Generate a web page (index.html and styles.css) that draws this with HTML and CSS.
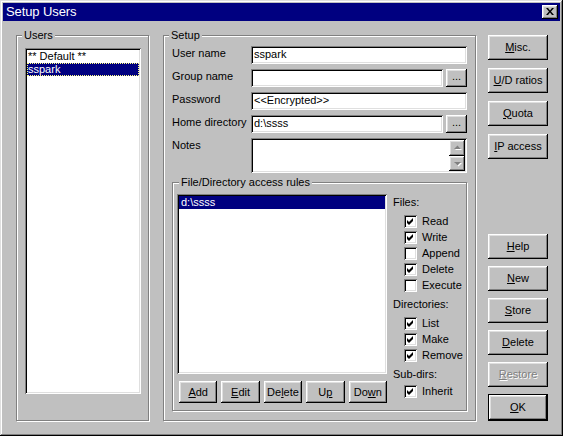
FILE: index.html
```html
<!DOCTYPE html>
<html>
<head>
<meta charset="utf-8">
<link rel="stylesheet" href="styles.css">
</head>
<body>
<div class="dialog">
  <div class="titlebar">
    <span class="title">Setup Users</span>
    <span class="close"><svg width="8" height="7" viewBox="0 0 8 7"><path d="M0 0h2l2 2.4 2-2.4h2l-3 3.5 3 3.5h-2l-2-2.4-2 2.4h-2l3-3.5z" fill="#000"/></svg></span>
  </div>
  <div class="content">
    <div class="group users">
      <span class="glabel">Users</span>
      <div class="listbox userlist">
        <div class="item">** Default **</div>
        <div class="item sel focus">sspark</div>
      </div>
    </div>

    <div class="group setup">
      <span class="glabel">Setup</span>
      <div class="form">
        <div class="lbl">User name</div>
        <div class="field">sspark</div>
        <div class="lbl">Group name</div>
        <div class="fieldrow"><div class="field grow"></div><div class="btn small">...</div></div>
        <div class="lbl">Password</div>
        <div class="field">&lt;&lt;Encrypted&gt;&gt;</div>
        <div class="lbl">Home directory</div>
        <div class="fieldrow"><div class="field grow">d:\ssss</div><div class="btn small">...</div></div>
        <div class="lbl">Notes</div>
        <div class="field notes">
          <div class="notetext"></div>
          <div class="vscroll">
            <div class="btn sbtn up"><svg width="9" height="6" viewBox="0 0 9 6"><path d="M2 5h7L5.5 1.5z" fill="#fff"/><path d="M1 4h7L4.5 0.5z" fill="#808080"/></svg></div>
            <div class="btn sbtn down"><svg width="9" height="6" viewBox="0 0 9 6"><path d="M2 2h7L5.5 5.5z" fill="#fff"/><path d="M1 1h7L4.5 4.5z" fill="#808080"/></svg></div>
          </div>
        </div>
      </div>

      <div class="group rules">
        <span class="glabel">File/Directory access rules</span>
        <div class="rules-left">
          <div class="listbox filelist">
            <div class="item sel">d:\ssss</div>
          </div>
          <div class="rulebtns">
            <div class="btn rb"><u>A</u>dd</div>
            <div class="btn rb"><u>E</u>dit</div>
            <div class="btn rb">De<u>l</u>ete</div>
            <div class="btn rb">U<u>p</u></div>
            <div class="btn rb">Do<u>w</u>n</div>
          </div>
        </div>
        <div class="rules-right">
          <div class="head">Files:</div>
          <div class="chk"><span class="box on"></span>Read</div>
          <div class="chk"><span class="box on"></span>Write</div>
          <div class="chk"><span class="box"></span>Append</div>
          <div class="chk"><span class="box on"></span>Delete</div>
          <div class="chk"><span class="box"></span>Execute</div>
          <div class="head">Directories:</div>
          <div class="chk"><span class="box on"></span>List</div>
          <div class="chk"><span class="box on"></span>Make</div>
          <div class="chk"><span class="box on"></span>Remove</div>
          <div class="head last">Sub-dirs:</div>
          <div class="chk"><span class="box on"></span>Inherit</div>
        </div>
      </div>
    </div>

    <div class="side">
      <div class="sidegroup">
        <div class="btn sb"><u>M</u>isc.</div>
        <div class="btn sb"><u>U</u>/D ratios</div>
        <div class="btn sb"><u>Q</u>uota</div>
        <div class="btn sb"><u>I</u>P access</div>
      </div>
      <div class="sidegroup bottom">
        <div class="btn sb"><u>H</u>elp</div>
        <div class="btn sb"><u>N</u>ew</div>
        <div class="btn sb"><u>S</u>tore</div>
        <div class="btn sb"><u>D</u>elete</div>
        <div class="btn sb disabled"><u>R</u>estore</div>
        <div class="defwrap"><div class="btn sb ok"><u>O</u>K</div></div>
      </div>
    </div>
  </div>
</div>
</body>
</html>
```

FILE: styles.css
```css
* { box-sizing: border-box; }
html, body { margin: 0; padding: 0; background: #c0c0c0; }
body {
  font-family: "Liberation Sans", Arial, sans-serif;
  font-size: 11px;
  line-height: 13px;
  color: #000;
}
.dialog {
  width: 563px;
  height: 436px;
  padding: 3px;
  background: #c0c0c0;
  box-shadow: inset -1px -1px #000, inset 1px 1px #dfdfdf, inset -2px -2px #808080, inset 2px 2px #fff;
}
.titlebar {
  height: 18px;
  background: #000080;
  color: #fff;
  display: flex;
  align-items: center;
  justify-content: space-between;
  padding: 0 2px 0 3px;
}
.title { font-size: 13px; line-height: 16px; letter-spacing: -0.1px; }
.close {
  width: 16px;
  height: 14px;
  background: #c0c0c0;
  box-shadow: inset -1px -1px #000, inset 1px 1px #fff, inset -2px -2px #808080, inset 2px 2px #dfdfdf;
  display: flex;
  align-items: center;
  justify-content: center;
  padding-bottom: 1px;
}
.close svg { display: block; }
.content {
  display: flex;
  padding: 14px 0 0 13px;
}
.group {
  position: relative;
  border: 1px solid #808080;
  box-shadow: inset 1px 1px #fff, 1px 1px #fff;
}
.glabel {
  position: absolute;
  top: -7px;
  left: 5px;
  padding: 0 2px;
  background: #c0c0c0;
  white-space: nowrap;
}
.users {
  width: 133px;
  height: 386px;
  padding: 12px 0 0 8px;
}
.listbox {
  background: #fff;
  box-shadow: inset 1px 1px #808080, inset -1px -1px #fff, inset 2px 2px #000, inset -2px -2px #dfdfdf;
  padding: 2px;
}
.userlist { width: 116px; height: 346px; }
.item { height: 13px; padding-left: 1px; white-space: nowrap; }
.sel { background: #000080; color: #fff; }
.focus { outline: 1px dotted #ffff80; outline-offset: -1px; }
.setup {
  width: 313px;
  height: 386px;
  margin-left: 14px;
  padding: 10px 8px 0 8px;
}
.form {
  display: grid;
  grid-template-columns: 79px 1fr;
  row-gap: 5px;
}
.lbl { padding-top: 1px; white-space: nowrap; }
.field {
  height: 18px;
  background: #fff;
  box-shadow: inset 1px 1px #808080, inset -1px -1px #fff, inset 2px 2px #000, inset -2px -2px #dfdfdf;
  padding: 2px 3px;
  white-space: nowrap;
}
.fieldrow { display: flex; gap: 3px; }
.grow { flex: 1; }
.btn {
  background: #c0c0c0;
  box-shadow: inset -1px -1px #000, inset 1px 1px #fff, inset -2px -2px #808080, inset 2px 2px #dfdfdf;
  display: flex;
  align-items: center;
  justify-content: center;
  white-space: nowrap;
}
.small { width: 21px; height: 18px; padding-bottom: 3px; }
.notes {
  height: 35px;
  display: flex;
  padding: 2px;
}
.notetext { flex: 1; }
.vscroll { width: 16px; display: flex; flex-direction: column; }
.sbtn { width: 16px; }
.sbtn.up { height: 16px; }
.sbtn.down { height: 15px; }
.sbtn svg { display: block; }
.rules {
  width: 295px;
  height: 229px;
  margin-top: 9px;
  display: flex;
  padding: 11px 0 0 4px;
}
.rules .glabel { left: 6px; }
.rules-left { width: 210px; }
.filelist { width: 210px; height: 180px; }
.filelist .item { padding-left: 2px; }
.rulebtns {
  display: grid;
  grid-template-columns: repeat(5, 1fr);
  column-gap: 4px;
  width: 208px;
  margin: 7px 0 0 2px;
}
.rb { height: 22px; }
.rules-right { margin-left: 6px; }
.head { height: 16px; line-height: 16px; margin-bottom: 3px; }
.chk + .head { margin-top: 3px; }
.head.last { margin-bottom: 1px; }
.chk {
  height: 16px;
  display: flex;
  align-items: center;
  padding-left: 11px;
}
.box {
  width: 13px;
  height: 13px;
  margin-right: 5px;
  background: #fff;
  box-shadow: inset 1px 1px #808080, inset -1px -1px #fff, inset 2px 2px #000, inset -2px -2px #dfdfdf;
  flex: none;
}
.box.on {
  background: #fff url("data:image/svg+xml,%3Csvg xmlns='http://www.w3.org/2000/svg' width='13' height='13' viewBox='0 0 13 13'%3E%3Cpath d='M3 5l2 2 4-4v3l-4 4-2-2z' fill='%23000'/%3E%3C/svg%3E") no-repeat;
}
.side {
  width: 60px;
  height: 386px;
  margin-left: 12px;
  display: flex;
  flex-direction: column;
  justify-content: space-between;
}
.sidegroup { display: flex; flex-direction: column; gap: 8px; }
.sidegroup.bottom { gap: 7px; }
.sb { height: 25px; padding-bottom: 1px; }
.disabled { color: #808080; text-shadow: 1px 1px 0 #fff; }
.defwrap { border: 1px solid #000; height: 27px; }
.defwrap .ok { height: 25px; }
u { text-decoration: underline; text-underline-offset: 1px; }
```
